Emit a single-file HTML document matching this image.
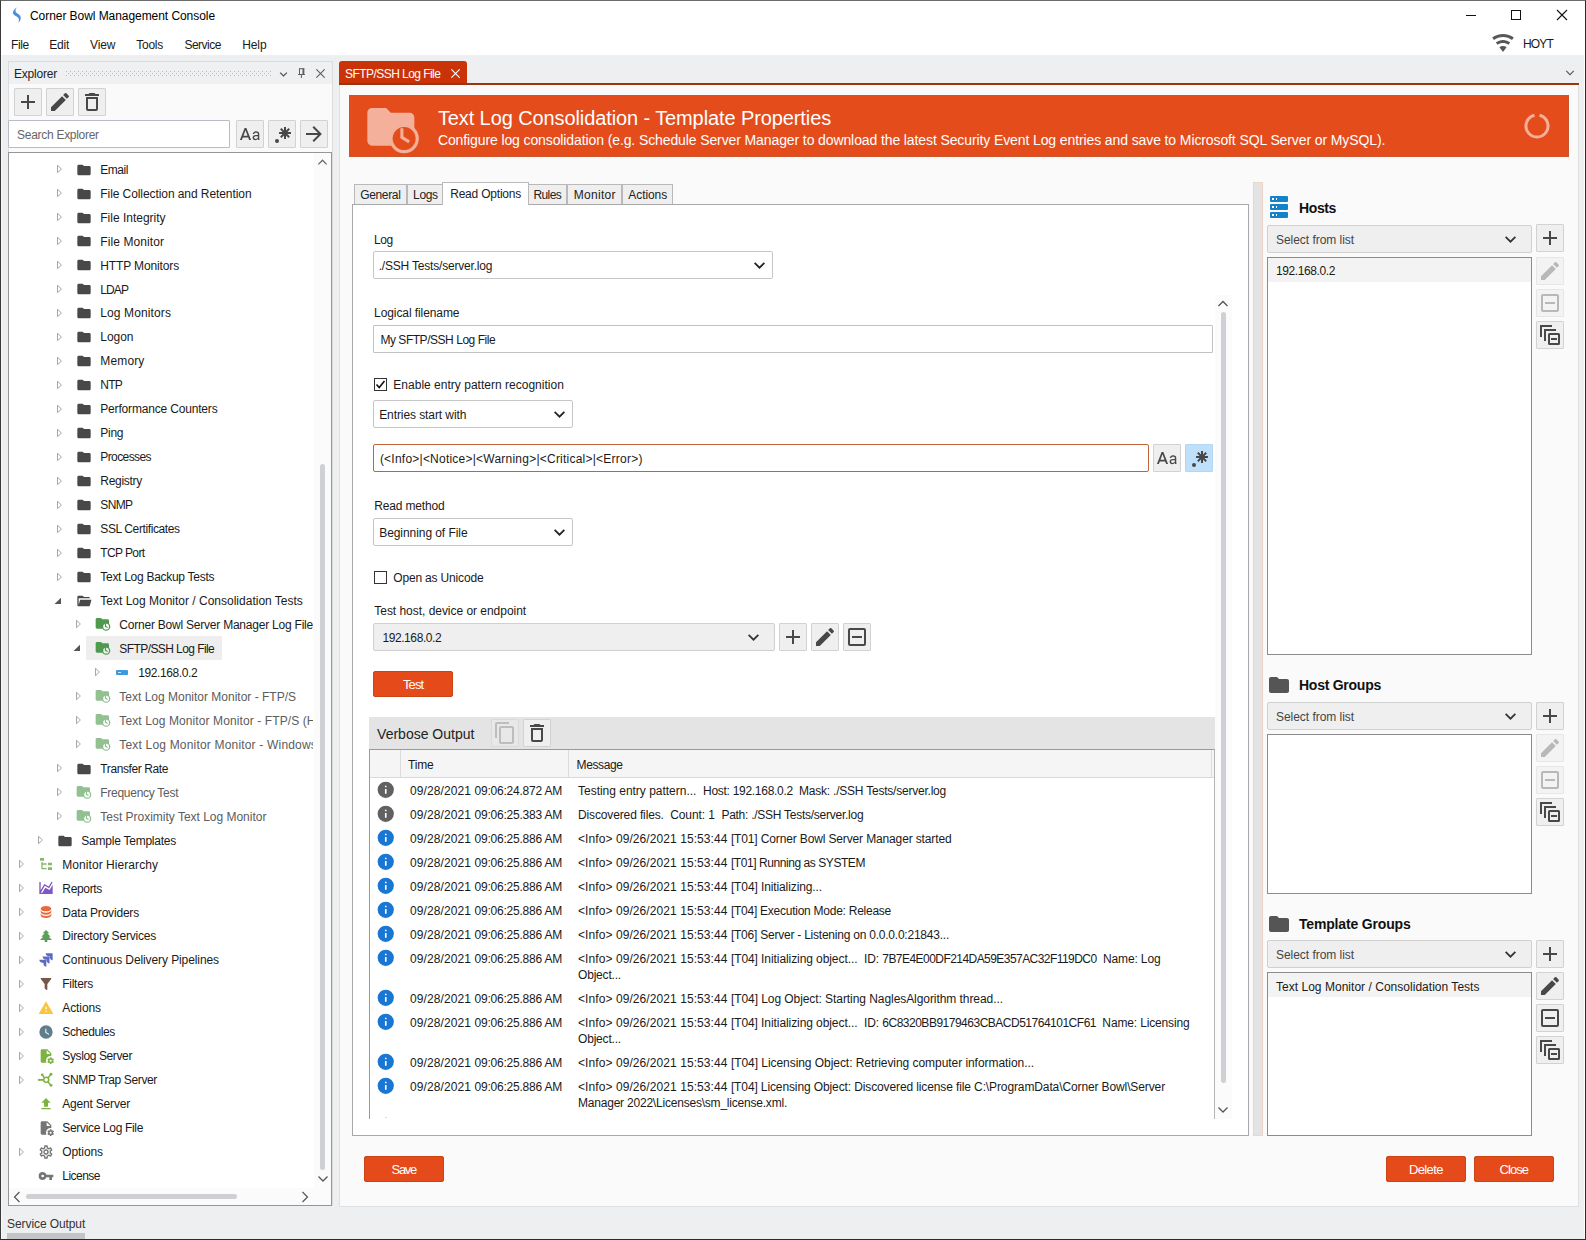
<!DOCTYPE html>
<html><head><meta charset="utf-8"><title>Corner Bowl Management Console</title>
<style>
*{box-sizing:border-box;margin:0;padding:0}
html,body{width:1586px;height:1240px;overflow:hidden;background:#eeeff1}
body{font-family:"Liberation Sans",sans-serif;font-size:12px;color:#1a1a1a;position:relative}
.abs{position:absolute}
.t{position:absolute;white-space:pre;line-height:16px;font-size:12px;margin-top:1px}
.btn{position:absolute;border:1px solid #d2d2d2;background:#efefef;border-radius:1px}
.combo{position:absolute;border:1px solid #c6c6c6;border-radius:2px;background:#fff}
.inp{position:absolute;border:1px solid #c2c2c2;background:#fff;border-radius:1px}
.rbtn{position:absolute;background:#e54b1a;border:1px solid #cb4413;border-radius:2px}
.tab{position:absolute;top:184px;height:20px;border:1px solid #b9b9b9;border-bottom:none;background:#efefef}
#tree{position:absolute;left:9px;top:153px;width:304px;height:1035px;overflow:hidden;background:#fff}
</style></head><body>
<!-- window frame -->
<div class="abs" style="left:0;top:0;width:1586px;height:1240px;border:1px solid #2b2b2b;border-top-color:#6a6a6a;border-left-color:#3a3a3a"></div>
<div class="abs" style="left:1px;top:1px;width:1584px;height:1238px;border-left:1px solid #f8f8f8;border-right:1px solid #fdfdfd"></div>
<!-- title + menu bar -->
<div class="abs" style="left:1px;top:1px;width:1584px;height:54px;background:#fff"></div>
<svg class="abs" style="left:11px;top:6px" width="12" height="18" viewBox="0 0 12 18"><path d="M5.9,1.2C3.5,3 1.6,5 2,7.2C2.5,9.4 6,9.8 7.4,12C8.3,13.5 8,15 7.3,16.7C9.2,15 10.1,13 9.6,10.9C9,8.4 5.6,7.6 4.7,5.8C4.1,4.5 4.8,2.8 5.9,1.2Z" fill="#4a8fd8"/></svg>
<div class="t" style="left:30.0px;top:7.0px;color:#000;letter-spacing:-0.059px">Corner Bowl Management Console</div>
<!-- window controls -->
<div class="abs" style="left:1466px;top:15px;width:10px;height:1px;background:#111"></div>
<div class="abs" style="left:1511px;top:10px;width:10px;height:10px;border:1px solid #111"></div>
<svg class="abs" style="left:1556px;top:9px" width="12" height="12" viewBox="0 0 12 12"><path d="M1,1L11,11M11,1L1,11" stroke="#111" stroke-width="1.1"/></svg>
<!-- menu -->
<div class="t" style="left:11.1px;top:36.0px;letter-spacing:-0.386px">File</div>
<div class="t" style="left:49.3px;top:36.0px;letter-spacing:-0.247px">Edit</div>
<div class="t" style="left:90.0px;top:36.0px;letter-spacing:-0.124px">View</div>
<div class="t" style="left:136.3px;top:36.0px;letter-spacing:-0.283px">Tools</div>
<div class="t" style="left:184.4px;top:36.0px;letter-spacing:-0.517px">Service</div>
<div class="t" style="left:242.2px;top:36.0px;letter-spacing:-0.097px">Help</div>
<svg style="position:absolute;left:1490.8px;top:30.9px" width="24.0" height="24.0" viewBox="0 0 24 24"><path fill="#585858" fill-rule="evenodd" d="M12,21L15.6,16.2C14.6,15.45 13.35,15 12,15C10.65,15 9.4,15.45 8.4,16.2L12,21M12,3C7.95,3 4.21,4.34 1.2,6.6L3,9C5.5,7.12 8.62,6 12,6C15.38,6 18.5,7.12 21,9L22.8,6.6C19.79,4.34 16.05,3 12,3M12,9C9.3,9 6.81,9.89 4.8,11.4L6.6,13.8C8.1,12.67 9.97,12 12,12C14.03,12 15.9,12.67 17.4,13.8L19.2,11.4C17.19,9.89 14.7,9 12,9Z"/></svg>
<div class="t" style="left:1523.0px;top:35.0px;letter-spacing:-0.836px">HOYT</div>

<!-- explorer panel -->
<div class="abs" style="left:8px;top:61px;width:325px;height:1145px;background:#fafafa;border:1px solid #dcdcdc"></div>
<div class="abs" style="left:9px;top:62px;width:323px;height:22px;background:#eff0f2"></div>
<div class="t" style="left:14.0px;top:65.0px;color:#222;letter-spacing:-0.211px">Explorer</div>
<svg class="abs" style="left:66px;top:71px" width="206" height="5"><defs><pattern id="dp" width="4" height="4" patternUnits="userSpaceOnUse"><rect x="0" y="0" width="1" height="1" fill="#b9bbc0"/><rect x="2" y="2" width="1" height="1" fill="#b9bbc0"/></pattern></defs><rect width="206" height="5" fill="url(#dp)"/></svg>
<svg style="position:absolute;left:279.0px;top:69.5px" width="9.0" height="9.0" viewBox="0 0 12 12"><path d="M1.5,3.5L6,8L10.5,3.5" fill="none" stroke="#4e4e4e" stroke-width="1.6"/></svg>
<svg class="abs" style="left:297px;top:67px" width="10" height="12" viewBox="0 0 10 12"><path d="M2,1.7H7.4M2.5,1.7V7.5M1.2,7.5H7.9M4.4,7.5V11" stroke="#5e5e5e" stroke-width="1" fill="none"/><path d="M6.4,1.7V7.5" stroke="#5e5e5e" stroke-width="1.9" fill="none"/></svg>
<svg class="abs" style="left:316px;top:69px" width="9" height="9" viewBox="0 0 9 9"><path d="M0.3,0.3L8.7,8.7M8.7,0.3L0.3,8.7" stroke="#5e5e5e" stroke-width="1.1"/></svg>
<div class="btn" style="left:14.0px;top:88.0px;width:28px;height:28px;background:#efefef;border-color:#d2d2d2"><svg style="position:absolute;left:1.0px;top:1.0px" width="24" height="24" viewBox="0 0 24 24"><path fill="#484848" fill-rule="evenodd" d="M19,13H13V19H11V13H5V11H11V5H13V11H19V13Z"/></svg></div>
<div class="btn" style="left:46.0px;top:88.0px;width:28px;height:28px;background:#efefef;border-color:#d2d2d2"><svg style="position:absolute;left:1.0px;top:1.0px" width="24" height="24" viewBox="0 0 24 24"><path fill="#484848" fill-rule="evenodd" d="M20.71,7.04C21.1,6.65 21.1,6 20.71,5.63L18.37,3.29C18,2.9 17.35,2.9 16.96,3.29L15.12,5.12L18.87,8.87M3,17.25V21H6.75L17.81,9.93L14.06,6.18L3,17.25Z"/></svg></div>
<div class="btn" style="left:78.0px;top:88.0px;width:28px;height:28px;background:#efefef;border-color:#d2d2d2"><svg style="position:absolute;left:1.0px;top:1.0px" width="24" height="24" viewBox="0 0 24 24"><path fill="#484848" fill-rule="evenodd" d="M6,19A2,2 0 0,0 8,21H16A2,2 0 0,0 18,19V7H6V19M8,9H16V19H8V9M15.5,4L14.5,3H9.5L8.5,4H5V6H19V4H15.5Z"/></svg></div>
<div class="inp" style="left:8px;top:120px;width:222px;height:28px;border-color:#b9bcc4"></div>
<div class="t" style="left:17.1px;top:125.5px;color:#666;letter-spacing:-0.290px">Search Explorer</div>
<div class="btn" style="left:236.0px;top:120.0px;width:28px;height:28px;background:#efefef;border-color:#d2d2d2"><svg style="position:absolute;left:1.0px;top:1.0px" width="24" height="24" viewBox="0 0 24 24"><path fill="#484848" fill-rule="evenodd" d="M20.06,18C20,17.83 19.91,17.54 19.86,17.11C19.19,17.81 18.38,18.16 17.45,18.16C16.62,18.16 15.93,17.92 15.4,17.45C14.87,17 14.6,16.39 14.6,15.66C14.6,14.78 14.93,14.1 15.6,13.61C16.27,13.12 17.21,12.88 18.43,12.88H19.83V12.24C19.83,11.75 19.68,11.36 19.38,11.07C19.08,10.78 18.63,10.64 18.05,10.64C17.53,10.64 17.1,10.76 16.75,11C16.4,11.25 16.23,11.54 16.23,11.89H14.77C14.77,11.46 14.92,11.05 15.22,10.65C15.5,10.25 15.93,9.94 16.44,9.71C16.95,9.5 17.5,9.36 18.13,9.36C19.11,9.36 19.87,9.6 20.42,10.09C20.97,10.58 21.26,11.25 21.28,12.11V16C21.28,16.8 21.38,17.42 21.58,17.88V18H20.06M17.66,16.88C18.11,16.88 18.54,16.77 18.95,16.56C19.35,16.35 19.65,16.07 19.83,15.73V14.16H18.7C16.93,14.16 16.04,14.63 16.04,15.57C16.04,16 16.19,16.3 16.5,16.53C16.8,16.76 17.18,16.88 17.66,16.88M5.46,13.71H9.53L7.5,8.29L5.46,13.71M6.64,6H8.36L13.07,18H11.14L10.17,15.43H4.82L3.86,18H1.93L6.64,6Z"/></svg></div>
<div class="btn" style="left:268.0px;top:120.0px;width:28px;height:28px;background:#efefef;border-color:#d2d2d2"><svg style="position:absolute;left:1.0px;top:1.0px" width="24" height="24" viewBox="0 0 24 24"><path fill="#484848" fill-rule="evenodd" d="M16,16.92C15.67,16.97 15.34,17 15,17C14.66,17 14.33,16.97 14,16.92V13.41L11.5,15.89C11,15.5 10.5,15 10.11,14.5L12.59,12H9.08C9.03,11.67 9,11.34 9,11C9,10.66 9.03,10.33 9.08,10H12.59L10.11,7.5C10.3,7.25 10.5,7 10.76,6.76V6.76C11,6.5 11.25,6.3 11.5,6.11L14,8.59V5.08C14.33,5.03 14.66,5 15,5C15.34,5 15.67,5.03 16,5.08V8.59L18.5,6.11C19,6.5 19.5,7 19.89,7.5L17.41,10H20.92C20.97,10.33 21,10.66 21,11C21,11.34 20.97,11.67 20.92,12H17.41L19.89,14.5C19.7,14.75 19.5,15 19.24,15.24V15.24C19,15.5 18.75,15.7 18.5,15.89L16,13.41V16.92M5,19A2,2 0 0,1 7,17A2,2 0 0,1 9,19A2,2 0 0,1 7,21A2,2 0 0,1 5,19H5Z"/></svg></div>
<div class="btn" style="left:300.0px;top:120.0px;width:28px;height:28px;background:#efefef;border-color:#d2d2d2"><svg style="position:absolute;left:1.0px;top:1.0px" width="24" height="24" viewBox="0 0 24 24"><path fill="#484848" fill-rule="evenodd" d="M4,11V13H16L10.5,18.5L11.92,19.92L19.84,12L11.92,4.08L10.5,5.5L16,11H4Z"/></svg></div>
<!-- tree box -->
<div class="abs" style="left:8px;top:152px;width:324px;height:1054px;background:#fff;border:1px solid #969696"></div>
<div id="tree">
<svg style="position:absolute;left:46.5px;top:10.20px" width="8" height="12" viewBox="0 0 8 12"><path d="M1.5,2.3L5.4,6L1.5,9.7Z" fill="#fff" stroke="#a6a6a6" stroke-width="1"/></svg>
<svg style="position:absolute;left:67.3px;top:8.6px" width="16" height="16" viewBox="0 0 24 24"><path fill="#484848" fill-rule="evenodd" d="M10,4H4C2.89,4 2,4.89 2,6V18A2,2 0 0,0 4,20H20A2,2 0 0,0 22,18V8C22,6.89 21.1,6 20,6H12L10,4Z"/></svg>
<div class="t" style="left:91.3px;top:7.7px;color:#1a1a1a;letter-spacing:-0.463px">Email</div>
<svg style="position:absolute;left:46.5px;top:34.16px" width="8" height="12" viewBox="0 0 8 12"><path d="M1.5,2.3L5.4,6L1.5,9.7Z" fill="#fff" stroke="#a6a6a6" stroke-width="1"/></svg>
<svg style="position:absolute;left:67.3px;top:32.559999999999995px" width="16" height="16" viewBox="0 0 24 24"><path fill="#484848" fill-rule="evenodd" d="M10,4H4C2.89,4 2,4.89 2,6V18A2,2 0 0,0 4,20H20A2,2 0 0,0 22,18V8C22,6.89 21.1,6 20,6H12L10,4Z"/></svg>
<div class="t" style="left:91.3px;top:31.66px;color:#1a1a1a;letter-spacing:-0.077px">File Collection and Retention</div>
<svg style="position:absolute;left:46.5px;top:58.12px" width="8" height="12" viewBox="0 0 8 12"><path d="M1.5,2.3L5.4,6L1.5,9.7Z" fill="#fff" stroke="#a6a6a6" stroke-width="1"/></svg>
<svg style="position:absolute;left:67.3px;top:56.519999999999996px" width="16" height="16" viewBox="0 0 24 24"><path fill="#484848" fill-rule="evenodd" d="M10,4H4C2.89,4 2,4.89 2,6V18A2,2 0 0,0 4,20H20A2,2 0 0,0 22,18V8C22,6.89 21.1,6 20,6H12L10,4Z"/></svg>
<div class="t" style="left:91.3px;top:55.62px;color:#1a1a1a;letter-spacing:-0.011px">File Integrity</div>
<svg style="position:absolute;left:46.5px;top:82.09px" width="8" height="12" viewBox="0 0 8 12"><path d="M1.5,2.3L5.4,6L1.5,9.7Z" fill="#fff" stroke="#a6a6a6" stroke-width="1"/></svg>
<svg style="position:absolute;left:67.3px;top:80.49000000000001px" width="16" height="16" viewBox="0 0 24 24"><path fill="#484848" fill-rule="evenodd" d="M10,4H4C2.89,4 2,4.89 2,6V18A2,2 0 0,0 4,20H20A2,2 0 0,0 22,18V8C22,6.89 21.1,6 20,6H12L10,4Z"/></svg>
<div class="t" style="left:91.3px;top:79.59px;color:#1a1a1a;letter-spacing:0.084px">File Monitor</div>
<svg style="position:absolute;left:46.5px;top:106.05px" width="8" height="12" viewBox="0 0 8 12"><path d="M1.5,2.3L5.4,6L1.5,9.7Z" fill="#fff" stroke="#a6a6a6" stroke-width="1"/></svg>
<svg style="position:absolute;left:67.3px;top:104.45px" width="16" height="16" viewBox="0 0 24 24"><path fill="#484848" fill-rule="evenodd" d="M10,4H4C2.89,4 2,4.89 2,6V18A2,2 0 0,0 4,20H20A2,2 0 0,0 22,18V8C22,6.89 21.1,6 20,6H12L10,4Z"/></svg>
<div class="t" style="left:91.3px;top:103.55px;color:#1a1a1a;letter-spacing:-0.136px">HTTP Monitors</div>
<svg style="position:absolute;left:46.5px;top:130.01px" width="8" height="12" viewBox="0 0 8 12"><path d="M1.5,2.3L5.4,6L1.5,9.7Z" fill="#fff" stroke="#a6a6a6" stroke-width="1"/></svg>
<svg style="position:absolute;left:67.3px;top:128.41px" width="16" height="16" viewBox="0 0 24 24"><path fill="#484848" fill-rule="evenodd" d="M10,4H4C2.89,4 2,4.89 2,6V18A2,2 0 0,0 4,20H20A2,2 0 0,0 22,18V8C22,6.89 21.1,6 20,6H12L10,4Z"/></svg>
<div class="t" style="left:91.3px;top:127.51px;color:#1a1a1a;letter-spacing:-0.915px">LDAP</div>
<svg style="position:absolute;left:46.5px;top:153.97px" width="8" height="12" viewBox="0 0 8 12"><path d="M1.5,2.3L5.4,6L1.5,9.7Z" fill="#fff" stroke="#a6a6a6" stroke-width="1"/></svg>
<svg style="position:absolute;left:67.3px;top:152.37px" width="16" height="16" viewBox="0 0 24 24"><path fill="#484848" fill-rule="evenodd" d="M10,4H4C2.89,4 2,4.89 2,6V18A2,2 0 0,0 4,20H20A2,2 0 0,0 22,18V8C22,6.89 21.1,6 20,6H12L10,4Z"/></svg>
<div class="t" style="left:91.3px;top:151.47px;color:#1a1a1a;letter-spacing:0.110px">Log Monitors</div>
<svg style="position:absolute;left:46.5px;top:177.93px" width="8" height="12" viewBox="0 0 8 12"><path d="M1.5,2.3L5.4,6L1.5,9.7Z" fill="#fff" stroke="#a6a6a6" stroke-width="1"/></svg>
<svg style="position:absolute;left:67.3px;top:176.33px" width="16" height="16" viewBox="0 0 24 24"><path fill="#484848" fill-rule="evenodd" d="M10,4H4C2.89,4 2,4.89 2,6V18A2,2 0 0,0 4,20H20A2,2 0 0,0 22,18V8C22,6.89 21.1,6 20,6H12L10,4Z"/></svg>
<div class="t" style="left:91.3px;top:175.43px;color:#1a1a1a;letter-spacing:-0.035px">Logon</div>
<svg style="position:absolute;left:46.5px;top:201.90px" width="8" height="12" viewBox="0 0 8 12"><path d="M1.5,2.3L5.4,6L1.5,9.7Z" fill="#fff" stroke="#a6a6a6" stroke-width="1"/></svg>
<svg style="position:absolute;left:67.3px;top:200.3px" width="16" height="16" viewBox="0 0 24 24"><path fill="#484848" fill-rule="evenodd" d="M10,4H4C2.89,4 2,4.89 2,6V18A2,2 0 0,0 4,20H20A2,2 0 0,0 22,18V8C22,6.89 21.1,6 20,6H12L10,4Z"/></svg>
<div class="t" style="left:91.3px;top:199.4px;color:#1a1a1a;letter-spacing:0.143px">Memory</div>
<svg style="position:absolute;left:46.5px;top:225.86px" width="8" height="12" viewBox="0 0 8 12"><path d="M1.5,2.3L5.4,6L1.5,9.7Z" fill="#fff" stroke="#a6a6a6" stroke-width="1"/></svg>
<svg style="position:absolute;left:67.3px;top:224.26000000000002px" width="16" height="16" viewBox="0 0 24 24"><path fill="#484848" fill-rule="evenodd" d="M10,4H4C2.89,4 2,4.89 2,6V18A2,2 0 0,0 4,20H20A2,2 0 0,0 22,18V8C22,6.89 21.1,6 20,6H12L10,4Z"/></svg>
<div class="t" style="left:91.3px;top:223.36px;color:#1a1a1a;letter-spacing:-0.767px">NTP</div>
<svg style="position:absolute;left:46.5px;top:249.82px" width="8" height="12" viewBox="0 0 8 12"><path d="M1.5,2.3L5.4,6L1.5,9.7Z" fill="#fff" stroke="#a6a6a6" stroke-width="1"/></svg>
<svg style="position:absolute;left:67.3px;top:248.22px" width="16" height="16" viewBox="0 0 24 24"><path fill="#484848" fill-rule="evenodd" d="M10,4H4C2.89,4 2,4.89 2,6V18A2,2 0 0,0 4,20H20A2,2 0 0,0 22,18V8C22,6.89 21.1,6 20,6H12L10,4Z"/></svg>
<div class="t" style="left:91.3px;top:247.32px;color:#1a1a1a;letter-spacing:-0.177px">Performance Counters</div>
<svg style="position:absolute;left:46.5px;top:273.78px" width="8" height="12" viewBox="0 0 8 12"><path d="M1.5,2.3L5.4,6L1.5,9.7Z" fill="#fff" stroke="#a6a6a6" stroke-width="1"/></svg>
<svg style="position:absolute;left:67.3px;top:272.17999999999995px" width="16" height="16" viewBox="0 0 24 24"><path fill="#484848" fill-rule="evenodd" d="M10,4H4C2.89,4 2,4.89 2,6V18A2,2 0 0,0 4,20H20A2,2 0 0,0 22,18V8C22,6.89 21.1,6 20,6H12L10,4Z"/></svg>
<div class="t" style="left:91.3px;top:271.28px;color:#1a1a1a;letter-spacing:-0.283px">Ping</div>
<svg style="position:absolute;left:46.5px;top:297.74px" width="8" height="12" viewBox="0 0 8 12"><path d="M1.5,2.3L5.4,6L1.5,9.7Z" fill="#fff" stroke="#a6a6a6" stroke-width="1"/></svg>
<svg style="position:absolute;left:67.3px;top:296.14px" width="16" height="16" viewBox="0 0 24 24"><path fill="#484848" fill-rule="evenodd" d="M10,4H4C2.89,4 2,4.89 2,6V18A2,2 0 0,0 4,20H20A2,2 0 0,0 22,18V8C22,6.89 21.1,6 20,6H12L10,4Z"/></svg>
<div class="t" style="left:91.3px;top:295.24px;color:#1a1a1a;letter-spacing:-0.592px">Processes</div>
<svg style="position:absolute;left:46.5px;top:321.71px" width="8" height="12" viewBox="0 0 8 12"><path d="M1.5,2.3L5.4,6L1.5,9.7Z" fill="#fff" stroke="#a6a6a6" stroke-width="1"/></svg>
<svg style="position:absolute;left:67.3px;top:320.10999999999996px" width="16" height="16" viewBox="0 0 24 24"><path fill="#484848" fill-rule="evenodd" d="M10,4H4C2.89,4 2,4.89 2,6V18A2,2 0 0,0 4,20H20A2,2 0 0,0 22,18V8C22,6.89 21.1,6 20,6H12L10,4Z"/></svg>
<div class="t" style="left:91.3px;top:319.21px;color:#1a1a1a;letter-spacing:-0.289px">Registry</div>
<svg style="position:absolute;left:46.5px;top:345.67px" width="8" height="12" viewBox="0 0 8 12"><path d="M1.5,2.3L5.4,6L1.5,9.7Z" fill="#fff" stroke="#a6a6a6" stroke-width="1"/></svg>
<svg style="position:absolute;left:67.3px;top:344.07px" width="16" height="16" viewBox="0 0 24 24"><path fill="#484848" fill-rule="evenodd" d="M10,4H4C2.89,4 2,4.89 2,6V18A2,2 0 0,0 4,20H20A2,2 0 0,0 22,18V8C22,6.89 21.1,6 20,6H12L10,4Z"/></svg>
<div class="t" style="left:91.3px;top:343.17px;color:#1a1a1a;letter-spacing:-0.618px">SNMP</div>
<svg style="position:absolute;left:46.5px;top:369.63px" width="8" height="12" viewBox="0 0 8 12"><path d="M1.5,2.3L5.4,6L1.5,9.7Z" fill="#fff" stroke="#a6a6a6" stroke-width="1"/></svg>
<svg style="position:absolute;left:67.3px;top:368.03px" width="16" height="16" viewBox="0 0 24 24"><path fill="#484848" fill-rule="evenodd" d="M10,4H4C2.89,4 2,4.89 2,6V18A2,2 0 0,0 4,20H20A2,2 0 0,0 22,18V8C22,6.89 21.1,6 20,6H12L10,4Z"/></svg>
<div class="t" style="left:91.3px;top:367.13px;color:#1a1a1a;letter-spacing:-0.387px">SSL Certificates</div>
<svg style="position:absolute;left:46.5px;top:393.59px" width="8" height="12" viewBox="0 0 8 12"><path d="M1.5,2.3L5.4,6L1.5,9.7Z" fill="#fff" stroke="#a6a6a6" stroke-width="1"/></svg>
<svg style="position:absolute;left:67.3px;top:391.98999999999995px" width="16" height="16" viewBox="0 0 24 24"><path fill="#484848" fill-rule="evenodd" d="M10,4H4C2.89,4 2,4.89 2,6V18A2,2 0 0,0 4,20H20A2,2 0 0,0 22,18V8C22,6.89 21.1,6 20,6H12L10,4Z"/></svg>
<div class="t" style="left:91.3px;top:391.09px;color:#1a1a1a;letter-spacing:-0.616px">TCP Port</div>
<svg style="position:absolute;left:46.5px;top:417.55px" width="8" height="12" viewBox="0 0 8 12"><path d="M1.5,2.3L5.4,6L1.5,9.7Z" fill="#fff" stroke="#a6a6a6" stroke-width="1"/></svg>
<svg style="position:absolute;left:67.3px;top:415.95px" width="16" height="16" viewBox="0 0 24 24"><path fill="#484848" fill-rule="evenodd" d="M10,4H4C2.89,4 2,4.89 2,6V18A2,2 0 0,0 4,20H20A2,2 0 0,0 22,18V8C22,6.89 21.1,6 20,6H12L10,4Z"/></svg>
<div class="t" style="left:91.3px;top:415.05px;color:#1a1a1a;letter-spacing:-0.284px">Text Log Backup Tests</div>
<svg style="position:absolute;left:44px;top:442.52px" width="10" height="10" viewBox="0 0 10 10"><path d="M8,1.7V8H1.5Z" fill="#555"/></svg>
<svg style="position:absolute;left:67.3px;top:439.91999999999996px" width="16" height="16" viewBox="0 0 24 24"><path fill="#484848" fill-rule="evenodd" d="M19,20H4C2.89,20 2,19.1 2,18V6C2,4.89 2.89,4 4,4H10L12,6H19A2,2 0 0,1 21,8H21L4,8V18L6.14,10H23.21L20.93,18.5C20.7,19.37 19.92,20 19,20Z"/></svg>
<div class="t" style="left:91.3px;top:439.02px;color:#1a1a1a">Text Log Monitor / Consolidation Tests</div>
<svg style="position:absolute;left:65.5px;top:465.48px" width="8" height="12" viewBox="0 0 8 12"><path d="M1.5,2.3L5.4,6L1.5,9.7Z" fill="#fff" stroke="#a6a6a6" stroke-width="1"/></svg>
<svg style="position:absolute;left:86px;top:463.48px;opacity:1.0" width="16" height="16" viewBox="0 0 24 24"><path fill="#4f9a4f" d="M9,3H3C1.9,3 1,3.9 1,5V17A2,2 0 0,0 3,19H19A2,2 0 0,0 21,17V7C21,5.9 20.1,5 19,5H11L9,3Z"/><circle cx="16.66" cy="16" r="6.26" fill="#4f9a4f"/><circle cx="16.66" cy="16" r="4.3" fill="#fff"/><path d="M15.7,11.6V15.5L18.8,17.4" stroke="#4f9a4f" stroke-width="1.7" fill="none"/></svg>
<div class="t" style="left:110.3px;top:462.98px;color:#1a1a1a;letter-spacing:-0.221px">Corner Bowl Server Manager Log File</div>
<div style="position:absolute;left:77px;top:483.44px;width:136px;height:24px;background:#eeeeee"></div>
<svg style="position:absolute;left:63px;top:490.44px" width="10" height="10" viewBox="0 0 10 10"><path d="M8,1.7V8H1.5Z" fill="#555"/></svg>
<svg style="position:absolute;left:86px;top:487.44px;opacity:1.0" width="16" height="16" viewBox="0 0 24 24"><path fill="#4f9a4f" d="M9,3H3C1.9,3 1,3.9 1,5V17A2,2 0 0,0 3,19H19A2,2 0 0,0 21,17V7C21,5.9 20.1,5 19,5H11L9,3Z"/><circle cx="16.66" cy="16" r="6.26" fill="#4f9a4f"/><circle cx="16.66" cy="16" r="4.3" fill="#eeeeee"/><path d="M15.7,11.6V15.5L18.8,17.4" stroke="#4f9a4f" stroke-width="1.7" fill="none"/></svg>
<div class="t" style="left:110.3px;top:486.94px;color:#1a1a1a;letter-spacing:-0.577px">SFTP/SSH Log File</div>
<svg style="position:absolute;left:84.5px;top:513.40px" width="8" height="12" viewBox="0 0 8 12"><path d="M1.5,2.3L5.4,6L1.5,9.7Z" fill="#fff" stroke="#a6a6a6" stroke-width="1"/></svg>
<div style="position:absolute;left:107px;top:517.20px;width:12px;height:4.6px;background:#3d9ae0;border-radius:1px"></div><div style="position:absolute;left:108.5px;top:519.00px;width:3px;height:1px;background:#cfe6fa"></div>
<div class="t" style="left:129.3px;top:510.9px;color:#1a1a1a;letter-spacing:-0.410px">192.168.0.2</div>
<svg style="position:absolute;left:65.5px;top:537.36px" width="8" height="12" viewBox="0 0 8 12"><path d="M1.5,2.3L5.4,6L1.5,9.7Z" fill="#fff" stroke="#a6a6a6" stroke-width="1"/></svg>
<svg style="position:absolute;left:86px;top:535.36px;opacity:0.62" width="16" height="16" viewBox="0 0 24 24"><path fill="#4f9a4f" d="M9,3H3C1.9,3 1,3.9 1,5V17A2,2 0 0,0 3,19H19A2,2 0 0,0 21,17V7C21,5.9 20.1,5 19,5H11L9,3Z"/><circle cx="16.66" cy="16" r="6.26" fill="#4f9a4f"/><circle cx="16.66" cy="16" r="4.3" fill="#fff"/><path d="M15.7,11.6V15.5L18.8,17.4" stroke="#4f9a4f" stroke-width="1.7" fill="none"/></svg>
<div class="t" style="left:110.3px;top:534.86px;color:#5c5c5c">Text Log Monitor Monitor - FTP/S</div>
<svg style="position:absolute;left:65.5px;top:561.33px" width="8" height="12" viewBox="0 0 8 12"><path d="M1.5,2.3L5.4,6L1.5,9.7Z" fill="#fff" stroke="#a6a6a6" stroke-width="1"/></svg>
<svg style="position:absolute;left:86px;top:559.33px;opacity:0.62" width="16" height="16" viewBox="0 0 24 24"><path fill="#4f9a4f" d="M9,3H3C1.9,3 1,3.9 1,5V17A2,2 0 0,0 3,19H19A2,2 0 0,0 21,17V7C21,5.9 20.1,5 19,5H11L9,3Z"/><circle cx="16.66" cy="16" r="6.26" fill="#4f9a4f"/><circle cx="16.66" cy="16" r="4.3" fill="#fff"/><path d="M15.7,11.6V15.5L18.8,17.4" stroke="#4f9a4f" stroke-width="1.7" fill="none"/></svg>
<div class="t" style="left:110.3px;top:558.83px;color:#5c5c5c;letter-spacing:0.102px">Text Log Monitor Monitor - FTP/S (Host)</div>
<svg style="position:absolute;left:65.5px;top:585.29px" width="8" height="12" viewBox="0 0 8 12"><path d="M1.5,2.3L5.4,6L1.5,9.7Z" fill="#fff" stroke="#a6a6a6" stroke-width="1"/></svg>
<svg style="position:absolute;left:86px;top:583.29px;opacity:0.62" width="16" height="16" viewBox="0 0 24 24"><path fill="#4f9a4f" d="M9,3H3C1.9,3 1,3.9 1,5V17A2,2 0 0,0 3,19H19A2,2 0 0,0 21,17V7C21,5.9 20.1,5 19,5H11L9,3Z"/><circle cx="16.66" cy="16" r="6.26" fill="#4f9a4f"/><circle cx="16.66" cy="16" r="4.3" fill="#fff"/><path d="M15.7,11.6V15.5L18.8,17.4" stroke="#4f9a4f" stroke-width="1.7" fill="none"/></svg>
<div class="t" style="left:110.3px;top:582.79px;color:#5c5c5c;letter-spacing:0.185px">Text Log Monitor Monitor - Windows</div>
<svg style="position:absolute;left:46.5px;top:609.25px" width="8" height="12" viewBox="0 0 8 12"><path d="M1.5,2.3L5.4,6L1.5,9.7Z" fill="#fff" stroke="#a6a6a6" stroke-width="1"/></svg>
<svg style="position:absolute;left:67.3px;top:607.65px" width="16" height="16" viewBox="0 0 24 24"><path fill="#484848" fill-rule="evenodd" d="M10,4H4C2.89,4 2,4.89 2,6V18A2,2 0 0,0 4,20H20A2,2 0 0,0 22,18V8C22,6.89 21.1,6 20,6H12L10,4Z"/></svg>
<div class="t" style="left:91.3px;top:606.75px;color:#1a1a1a;letter-spacing:-0.394px">Transfer Rate</div>
<svg style="position:absolute;left:46.5px;top:633.21px" width="8" height="12" viewBox="0 0 8 12"><path d="M1.5,2.3L5.4,6L1.5,9.7Z" fill="#fff" stroke="#a6a6a6" stroke-width="1"/></svg>
<svg style="position:absolute;left:67px;top:631.21px;opacity:0.62" width="16" height="16" viewBox="0 0 24 24"><path fill="#4f9a4f" d="M9,3H3C1.9,3 1,3.9 1,5V17A2,2 0 0,0 3,19H19A2,2 0 0,0 21,17V7C21,5.9 20.1,5 19,5H11L9,3Z"/><circle cx="16.66" cy="16" r="6.26" fill="#4f9a4f"/><circle cx="16.66" cy="16" r="4.3" fill="#fff"/><path d="M15.7,11.6V15.5L18.8,17.4" stroke="#4f9a4f" stroke-width="1.7" fill="none"/></svg>
<div class="t" style="left:91.3px;top:630.71px;color:#5c5c5c;letter-spacing:-0.281px">Frequency Test</div>
<svg style="position:absolute;left:46.5px;top:657.17px" width="8" height="12" viewBox="0 0 8 12"><path d="M1.5,2.3L5.4,6L1.5,9.7Z" fill="#fff" stroke="#a6a6a6" stroke-width="1"/></svg>
<svg style="position:absolute;left:67px;top:655.17px;opacity:0.62" width="16" height="16" viewBox="0 0 24 24"><path fill="#4f9a4f" d="M9,3H3C1.9,3 1,3.9 1,5V17A2,2 0 0,0 3,19H19A2,2 0 0,0 21,17V7C21,5.9 20.1,5 19,5H11L9,3Z"/><circle cx="16.66" cy="16" r="6.26" fill="#4f9a4f"/><circle cx="16.66" cy="16" r="4.3" fill="#fff"/><path d="M15.7,11.6V15.5L18.8,17.4" stroke="#4f9a4f" stroke-width="1.7" fill="none"/></svg>
<div class="t" style="left:91.3px;top:654.67px;color:#5c5c5c;letter-spacing:-0.013px">Test Proximity Text Log Monitor</div>
<svg style="position:absolute;left:27.5px;top:681.14px" width="8" height="12" viewBox="0 0 8 12"><path d="M1.5,2.3L5.4,6L1.5,9.7Z" fill="#fff" stroke="#a6a6a6" stroke-width="1"/></svg>
<svg style="position:absolute;left:48.3px;top:679.54px" width="16" height="16" viewBox="0 0 24 24"><path fill="#484848" fill-rule="evenodd" d="M10,4H4C2.89,4 2,4.89 2,6V18A2,2 0 0,0 4,20H20A2,2 0 0,0 22,18V8C22,6.89 21.1,6 20,6H12L10,4Z"/></svg>
<div class="t" style="left:72.3px;top:678.64px;color:#1a1a1a;letter-spacing:-0.237px">Sample Templates</div>
<svg style="position:absolute;left:8.5px;top:705.10px" width="8" height="12" viewBox="0 0 8 12"><path d="M1.5,2.3L5.4,6L1.5,9.7Z" fill="#fff" stroke="#a6a6a6" stroke-width="1"/></svg>
<svg style="position:absolute;left:29px;top:703.1px" width="16" height="16" viewBox="0 0 24 24"><path fill="#8bb868" fill-rule="evenodd" d="M3,3H9V7H3V3M15,10H21V14H15V10M15,17H21V21H15V17M13,13H7V18H13V20H7L5,20V9H7V11H13V13Z"/></svg>
<div class="t" style="left:53.3px;top:702.6px;color:#1a1a1a;letter-spacing:0.059px">Monitor Hierarchy</div>
<svg style="position:absolute;left:8.5px;top:729.06px" width="8" height="12" viewBox="0 0 8 12"><path d="M1.5,2.3L5.4,6L1.5,9.7Z" fill="#fff" stroke="#a6a6a6" stroke-width="1"/></svg>
<svg style="position:absolute;left:29px;top:727.06px" width="16" height="16" viewBox="0 0 24 24"><path fill="#7e57c2" fill-rule="evenodd" d="M17.45,15.18L22,7.31V19L22,21H2V3H4V15.54L9.5,6L16,9.78L20.24,2.45L21.97,3.45L16.74,12.5L10.23,8.75L4.31,19H6.57L10.96,11.44L17.45,15.18Z"/></svg>
<div class="t" style="left:53.3px;top:726.56px;color:#1a1a1a;letter-spacing:-0.333px">Reports</div>
<svg style="position:absolute;left:8.5px;top:753.02px" width="8" height="12" viewBox="0 0 8 12"><path d="M1.5,2.3L5.4,6L1.5,9.7Z" fill="#fff" stroke="#a6a6a6" stroke-width="1"/></svg>
<svg style="position:absolute;left:29px;top:751.02px" width="16" height="16" viewBox="0 0 24 24"><path fill="#e8693a" fill-rule="evenodd" d="M12,3C7.58,3 4,4.79 4,7C4,9.21 7.58,11 12,11C16.42,11 20,9.21 20,7C20,4.79 16.42,3 12,3M4,9V12C4,14.21 7.58,16 12,16C16.42,16 20,14.21 20,12V9C20,11.21 16.42,13 12,13C7.58,13 4,11.21 4,9M4,14V17C4,19.21 7.58,21 12,21C16.42,21 20,19.21 20,17V14C20,16.21 16.42,18 12,18C7.58,18 4,16.21 4,14Z"/></svg>
<div class="t" style="left:53.3px;top:750.52px;color:#1a1a1a;letter-spacing:-0.191px">Data Providers</div>
<svg style="position:absolute;left:8.5px;top:776.98px" width="8" height="12" viewBox="0 0 8 12"><path d="M1.5,2.3L5.4,6L1.5,9.7Z" fill="#fff" stroke="#a6a6a6" stroke-width="1"/></svg>
<svg style="position:absolute;left:29px;top:774.98px" width="16" height="16" viewBox="0 0 24 24"><path fill="#5a9e5a" fill-rule="evenodd" d="M10,21V18H3L8,13H5L10,8H7L12,3L17,8H14L19,13H16L21,18H14V21H10Z"/></svg>
<div class="t" style="left:53.3px;top:774.48px;color:#1a1a1a;letter-spacing:-0.203px">Directory Services</div>
<svg style="position:absolute;left:8.5px;top:800.95px" width="8" height="12" viewBox="0 0 8 12"><path d="M1.5,2.3L5.4,6L1.5,9.7Z" fill="#fff" stroke="#a6a6a6" stroke-width="1"/></svg>
<svg style="position:absolute;left:29px;top:798.95px" width="16" height="16" viewBox="0 0 24 24"><path fill="#5c6bc0" fill-rule="evenodd" d="M11.53,2C11.53,4.4 13.5,6.35 15.88,6.35H17.66V8.05C17.66,10.45 19.6,12.39 22,12.4V2.84A0.84,0.84 0 0,0 21.16,2H11.53M6.77,6.8C6.78,9.19 8.72,11.13 11.11,11.14H12.91V12.86C12.92,15.25 14.86,17.19 17.25,17.2V7.63C17.24,7.17 16.88,6.81 16.42,6.8H6.77M2,11.6C2,14 3.95,15.94 6.35,15.94H8.13V17.66C8.14,20.05 10.08,21.99 12.47,22V12.43A0.84,0.84 0 0,0 11.63,11.59L2,11.6Z"/></svg>
<div class="t" style="left:53.3px;top:798.45px;color:#1a1a1a;letter-spacing:-0.094px">Continuous Delivery Pipelines</div>
<svg style="position:absolute;left:8.5px;top:824.91px" width="8" height="12" viewBox="0 0 8 12"><path d="M1.5,2.3L5.4,6L1.5,9.7Z" fill="#fff" stroke="#a6a6a6" stroke-width="1"/></svg>
<svg style="position:absolute;left:29px;top:822.91px" width="16" height="16" viewBox="0 0 24 24"><path fill="#795548" fill-rule="evenodd" d="M14,12V19.88C14.04,20.18 13.94,20.5 13.71,20.71C13.32,21.1 12.69,21.1 12.3,20.71L10.29,18.7C10.06,18.47 9.96,18.16 10,17.87V12H9.97L4.21,4.62C3.87,4.19 3.95,3.56 4.38,3.22C4.57,3.08 4.78,3 5,3V3H19V3C19.22,3 19.43,3.08 19.62,3.22C20.05,3.56 20.13,4.19 19.79,4.62L14.03,12H14Z"/></svg>
<div class="t" style="left:53.3px;top:822.41px;color:#1a1a1a;letter-spacing:-0.282px">Filters</div>
<svg style="position:absolute;left:8.5px;top:848.87px" width="8" height="12" viewBox="0 0 8 12"><path d="M1.5,2.3L5.4,6L1.5,9.7Z" fill="#fff" stroke="#a6a6a6" stroke-width="1"/></svg>
<svg style="position:absolute;left:29px;top:846.87px" width="16" height="16" viewBox="0 0 24 24"><path fill="#f9c440" fill-rule="evenodd" d="M13,14H11V10H13M13,18H11V16H13M1,21H23L12,2L1,21Z"/></svg>
<div class="t" style="left:53.3px;top:846.37px;color:#1a1a1a;letter-spacing:-0.094px">Actions</div>
<svg style="position:absolute;left:8.5px;top:872.83px" width="8" height="12" viewBox="0 0 8 12"><path d="M1.5,2.3L5.4,6L1.5,9.7Z" fill="#fff" stroke="#a6a6a6" stroke-width="1"/></svg>
<svg style="position:absolute;left:29px;top:870.83px" width="16" height="16" viewBox="0 0 24 24"><path fill="#607d8b" fill-rule="evenodd" d="M12,2A10,10 0 0,0 2,12A10,10 0 0,0 12,22A10,10 0 0,0 22,12A10,10 0 0,0 12,2M16.2,16.2L11,13V7H12.5V12.2L17,14.9L16.2,16.2Z"/></svg>
<div class="t" style="left:53.3px;top:870.33px;color:#1a1a1a;letter-spacing:-0.372px">Schedules</div>
<svg style="position:absolute;left:8.5px;top:896.79px" width="8" height="12" viewBox="0 0 8 12"><path d="M1.5,2.3L5.4,6L1.5,9.7Z" fill="#fff" stroke="#a6a6a6" stroke-width="1"/></svg>
<svg style="position:absolute;left:29px;top:894.79px" width="16" height="16" viewBox="0 0 24 24"><path fill="#7cb342" fill-rule="evenodd" d="M6 2C4.89 2 4 2.89 4 4V20C4 21.11 4.89 22 6 22H12.68A7 7 0 0 1 12 19A7 7 0 0 1 19 12A7 7 0 0 1 20 12.08V8L14 2H6M13 3.5L18.5 9H13V3.5M18 14C17.87 14 17.76 14.09 17.74 14.21L17.55 15.53C17.25 15.66 16.96 15.82 16.7 16L15.46 15.5C15.35 15.5 15.22 15.5 15.15 15.63L14.15 17.36C14.09 17.47 14.11 17.6 14.21 17.68L15.27 18.5C15.25 18.67 15.24 18.83 15.24 19C15.24 19.17 15.25 19.33 15.27 19.5L14.21 20.32C14.12 20.4 14.09 20.53 14.15 20.64L15.15 22.37C15.21 22.5 15.34 22.5 15.46 22.5L16.7 22C16.96 22.18 17.24 22.35 17.55 22.47L17.74 23.79C17.76 23.91 17.86 24 18 24H20C20.11 24 20.22 23.91 20.24 23.79L20.43 22.47C20.73 22.34 21 22.18 21.27 22L22.5 22.5C22.63 22.5 22.76 22.5 22.83 22.37L23.83 20.64C23.89 20.53 23.86 20.4 23.77 20.32L22.7 19.5C22.72 19.33 22.74 19.17 22.74 19C22.74 18.83 22.73 18.67 22.7 18.5L23.76 17.68C23.85 17.6 23.88 17.47 23.82 17.36L22.82 15.63C22.76 15.5 22.63 15.5 22.5 15.5L21.27 16C21 15.82 20.73 15.65 20.42 15.53L20.23 14.21C20.22 14.09 20.11 14 20 14H18M19 17.5C19.83 17.5 20.5 18.17 20.5 19C20.5 19.83 19.83 20.5 19 20.5C18.16 20.5 17.5 19.83 17.5 19C17.5 18.17 18.17 17.5 19 17.5Z"/></svg>
<div class="t" style="left:53.3px;top:894.29px;color:#1a1a1a;letter-spacing:-0.385px">Syslog Server</div>
<svg style="position:absolute;left:8.5px;top:920.76px" width="8" height="12" viewBox="0 0 8 12"><path d="M1.5,2.3L5.4,6L1.5,9.7Z" fill="#fff" stroke="#a6a6a6" stroke-width="1"/></svg>
<svg style="position:absolute;left:28px;top:918.26px" width="17" height="17" viewBox="0 0 24 24" fill="none" stroke="#7cb342" stroke-width="2.2"><circle cx="13" cy="12.5" r="3.6"/><path d="M4,12.5H9.4M15.4,9.8L19,5.5M15.4,15.2L19,19.5M10.6,9.8L8,6.2"/><circle cx="3" cy="12.5" r="1.7" fill="#7cb342" stroke="none"/><circle cx="19.8" cy="4.6" r="2" fill="#7cb342" stroke="none"/><circle cx="19.8" cy="20.2" r="2" fill="#7cb342" stroke="none"/><circle cx="7.4" cy="5.4" r="1.9" fill="#7cb342" stroke="none"/></svg>
<div class="t" style="left:53.3px;top:918.26px;color:#1a1a1a;letter-spacing:-0.362px">SNMP Trap Server</div>
<svg style="position:absolute;left:29px;top:942.72px" width="16" height="16" viewBox="0 0 24 24"><path fill="#7cb342" fill-rule="evenodd" d="M9,16V10H5L12,3L19,10H15V16H9M5,20V18H19V20H5Z"/></svg>
<div class="t" style="left:53.3px;top:942.22px;color:#1a1a1a;letter-spacing:-0.196px">Agent Server</div>
<svg style="position:absolute;left:29px;top:966.68px" width="16" height="16" viewBox="0 0 24 24"><path fill="#757575" fill-rule="evenodd" d="M6 2C4.89 2 4 2.89 4 4V20C4 21.11 4.89 22 6 22H12.68A7 7 0 0 1 12 19A7 7 0 0 1 19 12A7 7 0 0 1 20 12.08V8L14 2H6M13 3.5L18.5 9H13V3.5M18 14C17.87 14 17.76 14.09 17.74 14.21L17.55 15.53C17.25 15.66 16.96 15.82 16.7 16L15.46 15.5C15.35 15.5 15.22 15.5 15.15 15.63L14.15 17.36C14.09 17.47 14.11 17.6 14.21 17.68L15.27 18.5C15.25 18.67 15.24 18.83 15.24 19C15.24 19.17 15.25 19.33 15.27 19.5L14.21 20.32C14.12 20.4 14.09 20.53 14.15 20.64L15.15 22.37C15.21 22.5 15.34 22.5 15.46 22.5L16.7 22C16.96 22.18 17.24 22.35 17.55 22.47L17.74 23.79C17.76 23.91 17.86 24 18 24H20C20.11 24 20.22 23.91 20.24 23.79L20.43 22.47C20.73 22.34 21 22.18 21.27 22L22.5 22.5C22.63 22.5 22.76 22.5 22.83 22.37L23.83 20.64C23.89 20.53 23.86 20.4 23.77 20.32L22.7 19.5C22.72 19.33 22.74 19.17 22.74 19C22.74 18.83 22.73 18.67 22.7 18.5L23.76 17.68C23.85 17.6 23.88 17.47 23.82 17.36L22.82 15.63C22.76 15.5 22.63 15.5 22.5 15.5L21.27 16C21 15.82 20.73 15.65 20.42 15.53L20.23 14.21C20.22 14.09 20.11 14 20 14H18M19 17.5C19.83 17.5 20.5 18.17 20.5 19C20.5 19.83 19.83 20.5 19 20.5C18.16 20.5 17.5 19.83 17.5 19C17.5 18.17 18.17 17.5 19 17.5Z"/></svg>
<div class="t" style="left:53.3px;top:966.18px;color:#1a1a1a;letter-spacing:-0.334px">Service Log File</div>
<svg style="position:absolute;left:8.5px;top:992.64px" width="8" height="12" viewBox="0 0 8 12"><path d="M1.5,2.3L5.4,6L1.5,9.7Z" fill="#fff" stroke="#a6a6a6" stroke-width="1"/></svg>
<svg style="position:absolute;left:29px;top:990.64px" width="16" height="16" viewBox="0 0 24 24"><path fill="#757575" fill-rule="evenodd" d="M12,8A4,4 0 0,1 16,12A4,4 0 0,1 12,16A4,4 0 0,1 8,12A4,4 0 0,1 12,8M12,10A2,2 0 0,0 10,12A2,2 0 0,0 12,14A2,2 0 0,0 14,12A2,2 0 0,0 12,10M10,22C9.75,22 9.54,21.82 9.5,21.58L9.13,18.93C8.5,18.68 7.96,18.34 7.44,17.94L4.95,18.95C4.73,19.03 4.46,18.95 4.34,18.73L2.34,15.27C2.21,15.05 2.27,14.78 2.46,14.63L4.57,12.97L4.5,12L4.57,11L2.46,9.37C2.27,9.22 2.21,8.95 2.34,8.73L4.34,5.27C4.46,5.05 4.73,4.96 4.95,5.05L7.44,6.05C7.96,5.66 8.5,5.32 9.13,5.07L9.5,2.42C9.54,2.18 9.75,2 10,2H14C14.25,2 14.46,2.18 14.5,2.42L14.87,5.07C15.5,5.32 16.04,5.66 16.56,6.05L19.05,5.05C19.27,4.96 19.54,5.05 19.66,5.27L21.66,8.73C21.79,8.95 21.73,9.22 21.54,9.37L19.43,11L19.5,12L19.43,13L21.54,14.63C21.73,14.78 21.79,15.05 21.66,15.27L19.66,18.73C19.54,18.95 19.27,19.04 19.05,18.95L16.56,17.95C16.04,18.34 15.5,18.68 14.87,18.93L14.5,21.58C14.46,21.82 14.25,22 14,22H10M11.25,4L10.88,6.61C9.68,6.86 8.62,7.5 7.85,8.39L5.44,7.35L4.69,8.65L6.8,10.2C6.4,11.37 6.4,12.64 6.8,13.8L4.68,15.36L5.43,16.66L7.86,15.62C8.63,16.5 9.68,17.14 10.87,17.38L11.24,20H12.76L13.13,17.39C14.32,17.14 15.37,16.5 16.14,15.62L18.57,16.66L19.32,15.36L17.2,13.81C17.6,12.64 17.6,11.37 17.2,10.2L19.31,8.65L18.56,7.35L16.15,8.39C15.38,7.5 14.32,6.86 13.12,6.62L12.75,4H11.25Z"/></svg>
<div class="t" style="left:53.3px;top:990.14px;color:#1a1a1a;letter-spacing:-0.094px">Options</div>
<svg style="position:absolute;left:29px;top:1014.6px" width="16" height="16" viewBox="0 0 24 24"><path fill="#757575" fill-rule="evenodd" d="M7,14A2,2 0 0,1 5,12A2,2 0 0,1 7,10A2,2 0 0,1 9,12A2,2 0 0,1 7,14M12.65,10C11.83,7.67 9.61,6 7,6A6,6 0 0,0 1,12A6,6 0 0,0 7,18C9.61,18 11.83,16.33 12.65,14H17V18H21V14H23V10H12.65Z"/></svg>
<div class="t" style="left:53.3px;top:1014.1px;color:#1a1a1a;letter-spacing:-0.525px">License</div>
</div>
<!-- tree v-scrollbar -->
<div class="abs" style="left:314px;top:153px;width:17px;height:1052px;background:#fbfbfb"></div>
<svg style="position:absolute;left:316.5px;top:156.5px" width="11.0" height="11.0" viewBox="0 0 12 12"><path d="M1.5,8L6,3.5L10.5,8" fill="none" stroke="#666" stroke-width="1.3"/></svg>
<div class="abs" style="left:320px;top:464px;width:5px;height:706px;background:#cfd0d3;border-radius:3px"></div>
<svg style="position:absolute;left:316.5px;top:1172.5px" width="12.0" height="12.0" viewBox="0 0 12 12"><path d="M1.5,3.5L6,8L10.5,3.5" fill="none" stroke="#555" stroke-width="1.3"/></svg>
<!-- tree h-scrollbar -->
<div class="abs" style="left:9px;top:1188px;width:305px;height:17px;background:#fbfbfb"></div>
<svg class="abs" style="left:13px;top:1191px" width="8" height="12" viewBox="0 0 8 12"><path d="M6.5,1L1.5,6L6.5,11" fill="none" stroke="#555" stroke-width="1.2"/></svg>
<svg class="abs" style="left:301px;top:1191px" width="8" height="12" viewBox="0 0 8 12"><path d="M1.5,1L6.5,6L1.5,11" fill="none" stroke="#555" stroke-width="1.2"/></svg>
<div class="abs" style="left:26px;top:1194px;width:211px;height:5px;background:#cfd0d3;border-radius:3px"></div>

<!-- Service Output -->
<div class="t" style="left:7.1px;top:1214.5px;color:#333;letter-spacing:-0.091px">Service Output</div>
<div class="abs" style="left:7px;top:1233px;width:78px;height:6px;background:#c4c5c9"></div>

<!-- document tab -->
<div class="abs" style="left:339px;top:61px;width:128px;height:23px;background:#ca3308;border-radius:3px 3px 0 0"></div>
<div class="abs" style="left:339px;top:83px;width:1240px;height:2px;background:#9a3411;box-shadow:0 1px 0 #f7e3dc"></div>
<div class="t" style="left:345.0px;top:65.0px;color:#fff;letter-spacing:-0.553px">SFTP/SSH Log File</div>
<svg class="abs" style="left:451px;top:69px" width="9" height="9" viewBox="0 0 9 9"><path d="M0.3,0.3L8.7,8.7M8.7,0.3L0.3,8.7" stroke="#fff" stroke-width="1.1"/></svg>
<svg style="position:absolute;left:1564.5px;top:68.0px" width="10.0" height="10.0" viewBox="0 0 12 12"><path d="M1.5,3.5L6,8L10.5,3.5" fill="none" stroke="#555" stroke-width="1.3"/></svg>
<!-- content panel -->
<div class="abs" style="left:339px;top:85px;width:1240px;height:1122px;background:#fafafa;border:1px solid #e0e0e0;border-top:none"></div>
<!-- banner -->
<div class="abs" style="left:349px;top:95px;width:1220px;height:62px;background:#e54c1b;border:1px solid #c9552c"></div>
<svg style="position:absolute;left:364.85px;top:100.75px;opacity:1.0" width="56.4" height="56.4" viewBox="0 0 24 24"><path fill="#f4b09a" d="M9,3H3C1.9,3 1,3.9 1,5V17A2,2 0 0,0 3,19H19A2,2 0 0,0 21,17V7C21,5.9 20.1,5 19,5H11L9,3Z"/><circle cx="16.66" cy="16" r="6.26" fill="#f4b09a"/><circle cx="16.66" cy="16" r="4.9" fill="#e54c1b"/><path d="M15.7,11.6V15.5L18.8,17.4" stroke="#f4b09a" stroke-width="1.3" fill="none"/></svg>
<div class="t" style="left:437.9px;top:103.0px;font-size:20.0px;color:#fff;line-height:28.0px;letter-spacing:-0.101px">Text Log Consolidation - Template Properties</div>
<div class="t" style="left:437.9px;top:128.5px;font-size:14.0px;color:#fff;line-height:20.0px;letter-spacing:-0.108px">Configure log consolidation (e.g. Schedule Server Manager to download the latest Security Event Log entries and save to Microsoft SQL Server or MySQL).</div>
<svg class="abs" style="left:1522px;top:111px" width="30" height="30" viewBox="0 0 30 30"><path d="M17.5,4.3A11,11 0 1,1 12.5,4.3" fill="none" stroke="#f4b09a" stroke-width="3"/></svg>

<!-- tab page -->
<div class="abs" style="left:352px;top:204px;width:897px;height:932px;background:#fff;border:1px solid #a8a8a8"></div>
<div class="tab" style="left:354px;width:53px"></div>
<div class="tab" style="left:407px;width:36px"></div>
<div class="tab" style="left:528px;width:39px"></div>
<div class="tab" style="left:567px;width:55px"></div>
<div class="tab" style="left:622px;width:51px"></div>
<div class="tab" style="left:442px;width:87px;top:182px;height:23px;background:#fff"></div>
<div class="t" style="left:360.2px;top:185.5px;color:#222;letter-spacing:-0.343px">General</div>
<div class="t" style="left:413.1px;top:185.5px;color:#222;letter-spacing:-0.383px">Logs</div>
<div class="t" style="left:450.2px;top:184.5px;color:#222;letter-spacing:-0.208px">Read Options</div>
<div class="t" style="left:533.4px;top:185.5px;color:#222;letter-spacing:-0.577px">Rules</div>
<div class="t" style="left:573.8px;top:185.5px;color:#222;letter-spacing:0.269px">Monitor</div>
<div class="t" style="left:628.3px;top:185.5px;color:#222;letter-spacing:-0.080px">Actions</div>

<!-- form -->
<div class="t" style="left:374.1px;top:230.5px;letter-spacing:-0.410px">Log</div>
<div class="combo" style="left:373px;top:251px;width:400px;height:28px"></div>
<div class="t" style="left:378.7px;top:256.5px;letter-spacing:-0.192px">./SSH Tests/server.log</div>
<svg style="position:absolute;left:753.0px;top:259.0px" width="13.0" height="13.0" viewBox="0 0 12 12"><path d="M1.5,3.5L6,8L10.5,3.5" fill="none" stroke="#222" stroke-width="1.6"/></svg>
<!-- inner scroll -->
<div class="abs" style="left:1215px;top:295px;width:17px;height:824px;background:#fbfbfb"></div>
<svg style="position:absolute;left:1216.5px;top:297.7px" width="12.0" height="12.0" viewBox="0 0 12 12"><path d="M1.5,8L6,3.5L10.5,8" fill="none" stroke="#555" stroke-width="1.3"/></svg>
<div class="abs" style="left:1221px;top:312px;width:5px;height:771px;background:#cfd0d3;border-radius:3px"></div>
<svg style="position:absolute;left:1216.5px;top:1104.0px" width="12.0" height="12.0" viewBox="0 0 12 12"><path d="M1.5,3.5L6,8L10.5,3.5" fill="none" stroke="#555" stroke-width="1.3"/></svg>

<div class="t" style="left:374.1px;top:303.5px;letter-spacing:-0.089px">Logical filename</div>
<div class="inp" style="left:373px;top:325px;width:840px;height:28px"></div>
<div class="t" style="left:380.4px;top:330.5px;letter-spacing:-0.462px">My SFTP/SSH Log File</div>

<div class="abs" style="left:374px;top:378px;width:13px;height:13px;border:1px solid #333;background:#fff"></div>
<svg class="abs" style="left:375px;top:379px" width="11" height="11" viewBox="0 0 11 11"><path d="M1.5,5.5L4.2,8.5L9.5,2" fill="none" stroke="#111" stroke-width="1.6"/></svg>
<div class="t" style="left:393.3px;top:375.5px;letter-spacing:0.015px">Enable entry pattern recognition</div>
<div class="combo" style="left:373px;top:400px;width:200px;height:28px"></div>
<div class="t" style="left:379.2px;top:405.5px;letter-spacing:-0.084px">Entries start with</div>
<svg style="position:absolute;left:553.0px;top:408.0px" width="13.0" height="13.0" viewBox="0 0 12 12"><path d="M1.5,3.5L6,8L10.5,3.5" fill="none" stroke="#222" stroke-width="1.6"/></svg>

<div class="inp" style="left:373px;top:444px;width:776px;height:28px;border-color:#c1643b;border-radius:2px"></div>
<div class="t" style="left:379.9px;top:450.0px;letter-spacing:0.230px">(&lt;Info&gt;&#124;&lt;Notice&gt;&#124;&lt;Warning&gt;&#124;&lt;Critical&gt;&#124;&lt;Error&gt;)</div>
<div class="btn" style="left:1153.0px;top:444.0px;width:28px;height:28px;background:#efefef;border-color:#d2d2d2"><svg style="position:absolute;left:1.0px;top:1.0px" width="24" height="24" viewBox="0 0 24 24"><path fill="#484848" fill-rule="evenodd" d="M20.06,18C20,17.83 19.91,17.54 19.86,17.11C19.19,17.81 18.38,18.16 17.45,18.16C16.62,18.16 15.93,17.92 15.4,17.45C14.87,17 14.6,16.39 14.6,15.66C14.6,14.78 14.93,14.1 15.6,13.61C16.27,13.12 17.21,12.88 18.43,12.88H19.83V12.24C19.83,11.75 19.68,11.36 19.38,11.07C19.08,10.78 18.63,10.64 18.05,10.64C17.53,10.64 17.1,10.76 16.75,11C16.4,11.25 16.23,11.54 16.23,11.89H14.77C14.77,11.46 14.92,11.05 15.22,10.65C15.5,10.25 15.93,9.94 16.44,9.71C16.95,9.5 17.5,9.36 18.13,9.36C19.11,9.36 19.87,9.6 20.42,10.09C20.97,10.58 21.26,11.25 21.28,12.11V16C21.28,16.8 21.38,17.42 21.58,17.88V18H20.06M17.66,16.88C18.11,16.88 18.54,16.77 18.95,16.56C19.35,16.35 19.65,16.07 19.83,15.73V14.16H18.7C16.93,14.16 16.04,14.63 16.04,15.57C16.04,16 16.19,16.3 16.5,16.53C16.8,16.76 17.18,16.88 17.66,16.88M5.46,13.71H9.53L7.5,8.29L5.46,13.71M6.64,6H8.36L13.07,18H11.14L10.17,15.43H4.82L3.86,18H1.93L6.64,6Z"/></svg></div>
<div class="btn" style="left:1185.0px;top:444.0px;width:28px;height:28px;background:#bfe0fb;border-color:#b5d6f1"><svg style="position:absolute;left:1.0px;top:1.0px" width="24" height="24" viewBox="0 0 24 24"><path fill="#484848" fill-rule="evenodd" d="M16,16.92C15.67,16.97 15.34,17 15,17C14.66,17 14.33,16.97 14,16.92V13.41L11.5,15.89C11,15.5 10.5,15 10.11,14.5L12.59,12H9.08C9.03,11.67 9,11.34 9,11C9,10.66 9.03,10.33 9.08,10H12.59L10.11,7.5C10.3,7.25 10.5,7 10.76,6.76V6.76C11,6.5 11.25,6.3 11.5,6.11L14,8.59V5.08C14.33,5.03 14.66,5 15,5C15.34,5 15.67,5.03 16,5.08V8.59L18.5,6.11C19,6.5 19.5,7 19.89,7.5L17.41,10H20.92C20.97,10.33 21,10.66 21,11C21,11.34 20.97,11.67 20.92,12H17.41L19.89,14.5C19.7,14.75 19.5,15 19.24,15.24V15.24C19,15.5 18.75,15.7 18.5,15.89L16,13.41V16.92M5,19A2,2 0 0,1 7,17A2,2 0 0,1 9,19A2,2 0 0,1 7,21A2,2 0 0,1 5,19H5Z"/></svg></div>

<div class="t" style="left:374.3px;top:496.5px;letter-spacing:-0.168px">Read method</div>
<div class="combo" style="left:373px;top:518px;width:200px;height:28px"></div>
<div class="t" style="left:379.2px;top:523.5px;letter-spacing:-0.064px">Beginning of File</div>
<svg style="position:absolute;left:553.0px;top:526.0px" width="13.0" height="13.0" viewBox="0 0 12 12"><path d="M1.5,3.5L6,8L10.5,3.5" fill="none" stroke="#222" stroke-width="1.6"/></svg>

<div class="abs" style="left:374px;top:571px;width:13px;height:13px;border:1px solid #333;background:#fff"></div>
<div class="t" style="left:393.3px;top:568.5px;letter-spacing:-0.176px">Open as Unicode</div>

<div class="t" style="left:374.3px;top:601.5px;letter-spacing:-0.033px">Test host, device or endpoint</div>
<div class="combo" style="left:373px;top:623px;width:402px;height:28px;background:#efefef;border-color:#d0d0d0"></div>
<div class="t" style="left:382.4px;top:628.5px;letter-spacing:-0.410px">192.168.0.2</div>
<svg style="position:absolute;left:747.0px;top:631.0px" width="13.0" height="13.0" viewBox="0 0 12 12"><path d="M1.5,3.5L6,8L10.5,3.5" fill="none" stroke="#333" stroke-width="1.6"/></svg>
<div class="btn" style="left:779.0px;top:623.0px;width:28px;height:28px;background:#efefef;border-color:#d2d2d2"><svg style="position:absolute;left:1.0px;top:1.0px" width="24" height="24" viewBox="0 0 24 24"><path fill="#484848" fill-rule="evenodd" d="M19,13H13V19H11V13H5V11H11V5H13V11H19V13Z"/></svg></div>
<div class="btn" style="left:811.0px;top:623.0px;width:28px;height:28px;background:#efefef;border-color:#d2d2d2"><svg style="position:absolute;left:1.0px;top:1.0px" width="24" height="24" viewBox="0 0 24 24"><path fill="#484848" fill-rule="evenodd" d="M20.71,7.04C21.1,6.65 21.1,6 20.71,5.63L18.37,3.29C18,2.9 17.35,2.9 16.96,3.29L15.12,5.12L18.87,8.87M3,17.25V21H6.75L17.81,9.93L14.06,6.18L3,17.25Z"/></svg></div>
<div class="btn" style="left:843.0px;top:623.0px;width:28px;height:28px;background:#efefef;border-color:#d2d2d2"><svg style="position:absolute;left:1.0px;top:1.0px" width="24" height="24" viewBox="0 0 24 24"><path fill="#484848" fill-rule="evenodd" d="M19,19V5H5V19H19M19,3A2,2 0 0,1 21,5V19A2,2 0 0,1 19,21H5A2,2 0 0,1 3,19V5C3,3.89 3.9,3 5,3H19M17,11V13H7V11H17Z"/></svg></div>

<div class="rbtn" style="left:373px;top:671px;width:80px;height:26px"></div>
<div class="t" style="left:402.9px;top:676.0px;font-size:13.0px;color:#fff;letter-spacing:-0.861px">Test</div>

<!-- verbose output -->
<div class="abs" style="left:369px;top:717px;width:846px;height:33px;background:#e4e4e4"></div>
<div class="t" style="left:377.1px;top:724.0px;font-size:14.0px;color:#222;line-height:18.0px">Verbose Output</div>
<div class="btn" style="left:491.0px;top:719.0px;width:28px;height:28px;background:#e8e8e8;border-color:#dadada"><svg style="position:absolute;left:1.0px;top:1.0px" width="24" height="24" viewBox="0 0 24 24"><path fill="#bdbdbd" fill-rule="evenodd" d="M19,21H8V7H19M19,5H8A2,2 0 0,0 6,7V21A2,2 0 0,0 8,23H19A2,2 0 0,0 21,21V7A2,2 0 0,0 19,5M16,1H4A2,2 0 0,0 2,3V17H4V3H16V1Z"/></svg></div>
<div class="btn" style="left:523.0px;top:719.0px;width:28px;height:28px;background:#efefef;border-color:#d2d2d2"><svg style="position:absolute;left:1.0px;top:1.0px" width="24" height="24" viewBox="0 0 24 24"><path fill="#484848" fill-rule="evenodd" d="M6,19A2,2 0 0,0 8,21H16A2,2 0 0,0 18,19V7H6V19M8,9H16V19H8V9M15.5,4L14.5,3H9.5L8.5,4H5V6H19V4H15.5Z"/></svg></div>
<div class="abs" style="left:369px;top:749px;width:846px;height:370px;background:#fff;border:1px solid #9a9a9a;border-bottom:none;border-right-color:#b5b5b5"></div>
<div class="abs" style="left:370px;top:750px;width:844px;height:28px;background:#f5f5f5;border-bottom:1px solid #d9d9d9"></div>
<div class="abs" style="left:400px;top:750px;width:1px;height:27px;background:#dcdcdc"></div>
<div class="abs" style="left:568px;top:750px;width:1px;height:27px;background:#dcdcdc"></div>
<div class="abs" style="left:1211px;top:750px;width:1px;height:27px;background:#dcdcdc"></div>
<div class="t" style="left:408.1px;top:755.5px;letter-spacing:-0.184px">Time</div>
<div class="t" style="left:576.6px;top:755.5px;letter-spacing:-0.400px">Message</div>
<svg style="position:absolute;left:376.2px;top:780.4px" width="19.5" height="19.5" viewBox="0 0 24 24"><path fill="#616161" fill-rule="evenodd" d="M13,9H11V7H13M13,17H11V11H13M12,2A10,10 0 0,0 2,12A10,10 0 0,0 12,22A10,10 0 0,0 22,12A10,10 0 0,0 12,2Z"/></svg>
<div class="t" style="left:410px;top:781.5px;letter-spacing:0.099px">09/28/2021 </div>
<div class="t" style="left:474.5px;top:781.5px;letter-spacing:-0.217px">09:06:24.872 AM</div>
<div class="t" style="left:578px;top:781.5px;letter-spacing:-0.016px">Testing entry pattern...&nbsp; </div>
<div class="t" style="left:703px;top:781.5px;letter-spacing:-0.285px">Host: 192.168.0.2&nbsp; </div>
<div class="t" style="left:799px;top:781.5px;letter-spacing:-0.220px">Mask: ./SSH Tests/server.log</div>
<svg style="position:absolute;left:376.2px;top:804.4px" width="19.5" height="19.5" viewBox="0 0 24 24"><path fill="#616161" fill-rule="evenodd" d="M13,9H11V7H13M13,17H11V11H13M12,2A10,10 0 0,0 2,12A10,10 0 0,0 12,22A10,10 0 0,0 22,12A10,10 0 0,0 12,2Z"/></svg>
<div class="t" style="left:410px;top:805.5px;letter-spacing:0.099px">09/28/2021 </div>
<div class="t" style="left:474.5px;top:805.5px;letter-spacing:-0.217px">09:06:25.383 AM</div>
<div class="t" style="left:578px;top:805.5px;letter-spacing:-0.132px">Discovered files.&nbsp; </div>
<div class="t" style="left:670.2px;top:805.5px;letter-spacing:-0.083px">Count: 1&nbsp; </div>
<div class="t" style="left:721.4px;top:805.5px;letter-spacing:-0.260px">Path: ./SSH Tests/server.log</div>
<svg style="position:absolute;left:376.2px;top:828.4px" width="19.5" height="19.5" viewBox="0 0 24 24"><path fill="#1976d2" fill-rule="evenodd" d="M13,9H11V7H13M13,17H11V11H13M12,2A10,10 0 0,0 2,12A10,10 0 0,0 12,22A10,10 0 0,0 22,12A10,10 0 0,0 12,2Z"/></svg>
<div class="t" style="left:410px;top:829.5px;letter-spacing:0.099px">09/28/2021 </div>
<div class="t" style="left:474.5px;top:829.5px;letter-spacing:-0.217px">09:06:25.886 AM</div>
<div class="t" style="left:578px;top:829.5px;letter-spacing:0.077px">&lt;Info&gt; 09/26/2021 15:53:44 </div>
<div class="t" style="left:730.9px;top:829.5px;letter-spacing:-0.138px">[T01] Corner Bowl Server Manager started</div>
<svg style="position:absolute;left:376.2px;top:852.4px" width="19.5" height="19.5" viewBox="0 0 24 24"><path fill="#1976d2" fill-rule="evenodd" d="M13,9H11V7H13M13,17H11V11H13M12,2A10,10 0 0,0 2,12A10,10 0 0,0 12,22A10,10 0 0,0 22,12A10,10 0 0,0 12,2Z"/></svg>
<div class="t" style="left:410px;top:853.5px;letter-spacing:0.099px">09/28/2021 </div>
<div class="t" style="left:474.5px;top:853.5px;letter-spacing:-0.217px">09:06:25.886 AM</div>
<div class="t" style="left:578px;top:853.5px;letter-spacing:0.077px">&lt;Info&gt; 09/26/2021 15:53:44 </div>
<div class="t" style="left:730.9px;top:853.5px;letter-spacing:-0.434px">[T01] Running as SYSTEM</div>
<svg style="position:absolute;left:376.2px;top:876.4px" width="19.5" height="19.5" viewBox="0 0 24 24"><path fill="#1976d2" fill-rule="evenodd" d="M13,9H11V7H13M13,17H11V11H13M12,2A10,10 0 0,0 2,12A10,10 0 0,0 12,22A10,10 0 0,0 22,12A10,10 0 0,0 12,2Z"/></svg>
<div class="t" style="left:410px;top:877.5px;letter-spacing:0.099px">09/28/2021 </div>
<div class="t" style="left:474.5px;top:877.5px;letter-spacing:-0.217px">09:06:25.886 AM</div>
<div class="t" style="left:578px;top:877.5px;letter-spacing:0.077px">&lt;Info&gt; 09/26/2021 15:53:44 </div>
<div class="t" style="left:730.9px;top:877.5px;letter-spacing:-0.108px">[T04] Initializing...</div>
<svg style="position:absolute;left:376.2px;top:900.4px" width="19.5" height="19.5" viewBox="0 0 24 24"><path fill="#1976d2" fill-rule="evenodd" d="M13,9H11V7H13M13,17H11V11H13M12,2A10,10 0 0,0 2,12A10,10 0 0,0 12,22A10,10 0 0,0 22,12A10,10 0 0,0 12,2Z"/></svg>
<div class="t" style="left:410px;top:901.5px;letter-spacing:0.099px">09/28/2021 </div>
<div class="t" style="left:474.5px;top:901.5px;letter-spacing:-0.217px">09:06:25.886 AM</div>
<div class="t" style="left:578px;top:901.5px;letter-spacing:0.077px">&lt;Info&gt; 09/26/2021 15:53:44 </div>
<div class="t" style="left:730.9px;top:901.5px;letter-spacing:-0.253px">[T04] Execution Mode: Release</div>
<svg style="position:absolute;left:376.2px;top:924.4px" width="19.5" height="19.5" viewBox="0 0 24 24"><path fill="#1976d2" fill-rule="evenodd" d="M13,9H11V7H13M13,17H11V11H13M12,2A10,10 0 0,0 2,12A10,10 0 0,0 12,22A10,10 0 0,0 22,12A10,10 0 0,0 12,2Z"/></svg>
<div class="t" style="left:410px;top:925.5px;letter-spacing:0.099px">09/28/2021 </div>
<div class="t" style="left:474.5px;top:925.5px;letter-spacing:-0.217px">09:06:25.886 AM</div>
<div class="t" style="left:578px;top:925.5px;letter-spacing:0.077px">&lt;Info&gt; 09/26/2021 15:53:44 </div>
<div class="t" style="left:730.9px;top:925.5px;letter-spacing:-0.228px">[T06] Server - Listening on 0.0.0.0:21843...</div>
<svg style="position:absolute;left:376.2px;top:948.4px" width="19.5" height="19.5" viewBox="0 0 24 24"><path fill="#1976d2" fill-rule="evenodd" d="M13,9H11V7H13M13,17H11V11H13M12,2A10,10 0 0,0 2,12A10,10 0 0,0 12,22A10,10 0 0,0 22,12A10,10 0 0,0 12,2Z"/></svg>
<div class="t" style="left:410px;top:949.5px;letter-spacing:0.099px">09/28/2021 </div>
<div class="t" style="left:474.5px;top:949.5px;letter-spacing:-0.217px">09:06:25.886 AM</div>
<div class="t" style="left:578px;top:949.5px;letter-spacing:0.077px">&lt;Info&gt; 09/26/2021 15:53:44 </div>
<div class="t" style="left:730.9px;top:949.5px;letter-spacing:-0.079px">[T04] Initializing object...&nbsp; ID: </div>
<div class="t" style="left:882.3px;top:949.5px;letter-spacing:-0.551px">7B7E4E00DF214DA59E357AC32F119DC0</div>
<div class="t" style="left:1096.6px;top:949.5px;letter-spacing:-0.134px">&nbsp; Name: Log</div>
<div class="t" style="left:578px;top:965.5px;letter-spacing:-0.188px">Object...</div>
<svg style="position:absolute;left:376.2px;top:988.4px" width="19.5" height="19.5" viewBox="0 0 24 24"><path fill="#1976d2" fill-rule="evenodd" d="M13,9H11V7H13M13,17H11V11H13M12,2A10,10 0 0,0 2,12A10,10 0 0,0 12,22A10,10 0 0,0 22,12A10,10 0 0,0 12,2Z"/></svg>
<div class="t" style="left:410px;top:989.5px;letter-spacing:0.099px">09/28/2021 </div>
<div class="t" style="left:474.5px;top:989.5px;letter-spacing:-0.217px">09:06:25.886 AM</div>
<div class="t" style="left:578px;top:989.5px;letter-spacing:0.077px">&lt;Info&gt; 09/26/2021 15:53:44 </div>
<div class="t" style="left:730.9px;top:989.5px;letter-spacing:-0.065px">[T04] Log Object: Starting NaglesAlgorithm thread...</div>
<svg style="position:absolute;left:376.2px;top:1012.4px" width="19.5" height="19.5" viewBox="0 0 24 24"><path fill="#1976d2" fill-rule="evenodd" d="M13,9H11V7H13M13,17H11V11H13M12,2A10,10 0 0,0 2,12A10,10 0 0,0 12,22A10,10 0 0,0 22,12A10,10 0 0,0 12,2Z"/></svg>
<div class="t" style="left:410px;top:1013.5px;letter-spacing:0.099px">09/28/2021 </div>
<div class="t" style="left:474.5px;top:1013.5px;letter-spacing:-0.217px">09:06:25.886 AM</div>
<div class="t" style="left:578px;top:1013.5px;letter-spacing:0.077px">&lt;Info&gt; 09/26/2021 15:53:44 </div>
<div class="t" style="left:730.9px;top:1013.5px;letter-spacing:-0.079px">[T04] Initializing object...&nbsp; ID: </div>
<div class="t" style="left:882.3px;top:1013.5px;letter-spacing:-0.494px">6C8320BB9179463CBACD51764101CF61</div>
<div class="t" style="left:1096px;top:1013.5px;letter-spacing:-0.150px">&nbsp; Name: Licensing</div>
<div class="t" style="left:578px;top:1029.5px;letter-spacing:-0.188px">Object...</div>
<svg style="position:absolute;left:376.2px;top:1052.4px" width="19.5" height="19.5" viewBox="0 0 24 24"><path fill="#1976d2" fill-rule="evenodd" d="M13,9H11V7H13M13,17H11V11H13M12,2A10,10 0 0,0 2,12A10,10 0 0,0 12,22A10,10 0 0,0 22,12A10,10 0 0,0 12,2Z"/></svg>
<div class="t" style="left:410px;top:1053.5px;letter-spacing:0.099px">09/28/2021 </div>
<div class="t" style="left:474.5px;top:1053.5px;letter-spacing:-0.217px">09:06:25.886 AM</div>
<div class="t" style="left:578px;top:1053.5px;letter-spacing:0.077px">&lt;Info&gt; 09/26/2021 15:53:44 </div>
<div class="t" style="left:730.9px;top:1053.5px;letter-spacing:-0.052px">[T04] Licensing Object: Retrieving computer information...</div>
<svg style="position:absolute;left:376.2px;top:1076.4px" width="19.5" height="19.5" viewBox="0 0 24 24"><path fill="#1976d2" fill-rule="evenodd" d="M13,9H11V7H13M13,17H11V11H13M12,2A10,10 0 0,0 2,12A10,10 0 0,0 12,22A10,10 0 0,0 22,12A10,10 0 0,0 12,2Z"/></svg>
<div class="t" style="left:410px;top:1077.5px;letter-spacing:0.099px">09/28/2021 </div>
<div class="t" style="left:474.5px;top:1077.5px;letter-spacing:-0.217px">09:06:25.886 AM</div>
<div class="t" style="left:578px;top:1077.5px;letter-spacing:0.077px">&lt;Info&gt; 09/26/2021 15:53:44 </div>
<div class="t" style="left:730.9px;top:1077.5px;letter-spacing:-0.116px">[T04] Licensing Object: Discovered license file C:\ProgramData\Corner Bowl\Server</div>
<div class="t" style="left:578px;top:1093.5px;letter-spacing:-0.210px">Manager 2022\Licenses\sm_license.xml.</div>
<div class="abs" style="left:385px;top:1117px;width:2px;height:1px;background:#f3d98a"></div>

<!-- bottom buttons -->
<div class="rbtn" style="left:364px;top:1156px;width:80px;height:26px"></div>
<div class="t" style="left:391.6px;top:1161.0px;font-size:13.0px;color:#fff;letter-spacing:-1.335px">Save</div>
<div class="rbtn" style="left:1386px;top:1156px;width:80px;height:26px"></div>
<div class="t" style="left:1408.9px;top:1161.0px;font-size:13.0px;color:#fff;letter-spacing:-0.596px">Delete</div>
<div class="rbtn" style="left:1474px;top:1156px;width:80px;height:26px"></div>
<div class="t" style="left:1499.6px;top:1161.0px;font-size:13.0px;color:#fff;letter-spacing:-0.950px">Close</div>

<!-- splitter -->
<div class="abs" style="left:1253px;top:182px;width:10px;height:954px;background:#e3e3e3;border:1px solid #eed3c9"></div>

<!-- side -->
<svg style="position:absolute;left:1267px;top:195.2px" width="24" height="24" viewBox="0 0 24 24"><path fill="#1482ca" fill-rule="evenodd" d="M4,1H20A1,1 0 0,1 21,2V6A1,1 0 0,1 20,7H4A1,1 0 0,1 3,6V2A1,1 0 0,1 4,1M4,9H20A1,1 0 0,1 21,10V14A1,1 0 0,1 20,15H4A1,1 0 0,1 3,14V10A1,1 0 0,1 4,9M4,17H20A1,1 0 0,1 21,18V22A1,1 0 0,1 20,23H4A1,1 0 0,1 3,22V18A1,1 0 0,1 4,17M9,5H10V3H9V5M9,13H10V11H9V13M9,21H10V19H9V21M5,3V5H7V3H5M5,11V13H7V11H5M5,19V21H7V19H5Z"/></svg>
<div class="t" style="left:1299px;top:198.0px;font-size:14px;font-weight:bold;color:#111;line-height:18px;letter-spacing:-0.381px">Hosts</div>
<div class="combo" style="left:1267px;top:225px;width:265px;height:28px;background:#efefef;border-color:#d0d0d0"></div>
<div class="t" style="left:1276px;top:231px;color:#444;letter-spacing:-0.043px">Select from list</div>
<svg style="position:absolute;left:1504.0px;top:232.5px" width="13" height="13" viewBox="0 0 12 12"><path d="M1.5,3.5L6,8L10.5,3.5" fill="none" stroke="#333" stroke-width="1.6"/></svg>
<div class="btn" style="left:1536px;top:224px;width:28px;height:28px;background:#efefef;border-color:#d2d2d2"><svg style="position:absolute;left:1.0px;top:1.0px" width="24" height="24" viewBox="0 0 24 24"><path fill="#484848" fill-rule="evenodd" d="M19,13H13V19H11V13H5V11H11V5H13V11H19V13Z"/></svg></div>
<div style="position:absolute;left:1267px;top:257px;width:265px;height:398px;background:#fff;border:1px solid #8c8c8c"></div>
<div style="position:absolute;left:1268px;top:258px;width:263px;height:24px;background:#f3f3f3"></div>
<div class="t" style="left:1276px;top:261.5px;letter-spacing:-0.401px">192.168.0.2</div>
<div class="btn" style="left:1536px;top:257px;width:28px;height:28px;background:#f3f3f3;border-color:#e6e6e6"><svg style="position:absolute;left:1.0px;top:1.0px" width="24" height="24" viewBox="0 0 24 24"><path fill="#b8b8b8" fill-rule="evenodd" d="M20.71,7.04C21.1,6.65 21.1,6 20.71,5.63L18.37,3.29C18,2.9 17.35,2.9 16.96,3.29L15.12,5.12L18.87,8.87M3,17.25V21H6.75L17.81,9.93L14.06,6.18L3,17.25Z"/></svg></div>
<div class="btn" style="left:1536px;top:289px;width:28px;height:28px;background:#f3f3f3;border-color:#e6e6e6"><svg style="position:absolute;left:1.0px;top:1.0px" width="24" height="24" viewBox="0 0 24 24"><path fill="#b8b8b8" fill-rule="evenodd" d="M19,19V5H5V19H19M19,3A2,2 0 0,1 21,5V19A2,2 0 0,1 19,21H5A2,2 0 0,1 3,19V5C3,3.89 3.9,3 5,3H19M17,11V13H7V11H17Z"/></svg></div>
<div class="btn" style="left:1536px;top:321px;width:28px;height:28px;background:#efefef;border-color:#d2d2d2"><svg style="position:absolute;left:1.0px;top:1.0px" width="24" height="24" viewBox="0 0 24 24"><path fill="#484848" fill-rule="evenodd" d="M2,2H14V4H4V14H2ZM6,6H18V8H8V18H6ZM11.5,10H20.5A1.5,1.5 0 0,1 22,11.5V20.5A1.5,1.5 0 0,1 20.5,22H11.5A1.5,1.5 0 0,1 10,20.5V11.5A1.5,1.5 0 0,1 11.5,10ZM12,12V20H20V12ZM13,15H19V17H13Z"/></svg></div><svg style="position:absolute;left:1267px;top:672.5px" width="24" height="24" viewBox="0 0 24 24"><path fill="#555" fill-rule="evenodd" d="M10,4H4C2.89,4 2,4.89 2,6V18A2,2 0 0,0 4,20H20A2,2 0 0,0 22,18V8C22,6.89 21.1,6 20,6H12L10,4Z"/></svg>
<div class="t" style="left:1299px;top:675.0px;font-size:14px;font-weight:bold;color:#111;line-height:18px;letter-spacing:-0.253px">Host Groups</div>
<div class="combo" style="left:1267px;top:702px;width:265px;height:28px;background:#efefef;border-color:#d0d0d0"></div>
<div class="t" style="left:1276px;top:708px;color:#444;letter-spacing:-0.043px">Select from list</div>
<svg style="position:absolute;left:1504.0px;top:709.5px" width="13" height="13" viewBox="0 0 12 12"><path d="M1.5,3.5L6,8L10.5,3.5" fill="none" stroke="#333" stroke-width="1.6"/></svg>
<div class="btn" style="left:1536px;top:702px;width:28px;height:28px;background:#efefef;border-color:#d2d2d2"><svg style="position:absolute;left:1.0px;top:1.0px" width="24" height="24" viewBox="0 0 24 24"><path fill="#484848" fill-rule="evenodd" d="M19,13H13V19H11V13H5V11H11V5H13V11H19V13Z"/></svg></div>
<div style="position:absolute;left:1267px;top:734px;width:265px;height:160px;background:#fff;border:1px solid #8c8c8c"></div>
<div class="btn" style="left:1536px;top:734px;width:28px;height:28px;background:#f3f3f3;border-color:#e6e6e6"><svg style="position:absolute;left:1.0px;top:1.0px" width="24" height="24" viewBox="0 0 24 24"><path fill="#b8b8b8" fill-rule="evenodd" d="M20.71,7.04C21.1,6.65 21.1,6 20.71,5.63L18.37,3.29C18,2.9 17.35,2.9 16.96,3.29L15.12,5.12L18.87,8.87M3,17.25V21H6.75L17.81,9.93L14.06,6.18L3,17.25Z"/></svg></div>
<div class="btn" style="left:1536px;top:766px;width:28px;height:28px;background:#f3f3f3;border-color:#e6e6e6"><svg style="position:absolute;left:1.0px;top:1.0px" width="24" height="24" viewBox="0 0 24 24"><path fill="#b8b8b8" fill-rule="evenodd" d="M19,19V5H5V19H19M19,3A2,2 0 0,1 21,5V19A2,2 0 0,1 19,21H5A2,2 0 0,1 3,19V5C3,3.89 3.9,3 5,3H19M17,11V13H7V11H17Z"/></svg></div>
<div class="btn" style="left:1536px;top:798px;width:28px;height:28px;background:#efefef;border-color:#d2d2d2"><svg style="position:absolute;left:1.0px;top:1.0px" width="24" height="24" viewBox="0 0 24 24"><path fill="#484848" fill-rule="evenodd" d="M2,2H14V4H4V14H2ZM6,6H18V8H8V18H6ZM11.5,10H20.5A1.5,1.5 0 0,1 22,11.5V20.5A1.5,1.5 0 0,1 20.5,22H11.5A1.5,1.5 0 0,1 10,20.5V11.5A1.5,1.5 0 0,1 11.5,10ZM12,12V20H20V12ZM13,15H19V17H13Z"/></svg></div><svg style="position:absolute;left:1267px;top:911.5px" width="24" height="24" viewBox="0 0 24 24"><path fill="#555" fill-rule="evenodd" d="M10,4H4C2.89,4 2,4.89 2,6V18A2,2 0 0,0 4,20H20A2,2 0 0,0 22,18V8C22,6.89 21.1,6 20,6H12L10,4Z"/></svg>
<div class="t" style="left:1299px;top:914.0px;font-size:14px;font-weight:bold;color:#111;line-height:18px;letter-spacing:-0.173px">Template Groups</div>
<div class="combo" style="left:1267px;top:940px;width:265px;height:28px;background:#efefef;border-color:#d0d0d0"></div>
<div class="t" style="left:1276px;top:946px;color:#444;letter-spacing:-0.043px">Select from list</div>
<svg style="position:absolute;left:1504.0px;top:947.5px" width="13" height="13" viewBox="0 0 12 12"><path d="M1.5,3.5L6,8L10.5,3.5" fill="none" stroke="#333" stroke-width="1.6"/></svg>
<div class="btn" style="left:1536px;top:940px;width:28px;height:28px;background:#efefef;border-color:#d2d2d2"><svg style="position:absolute;left:1.0px;top:1.0px" width="24" height="24" viewBox="0 0 24 24"><path fill="#484848" fill-rule="evenodd" d="M19,13H13V19H11V13H5V11H11V5H13V11H19V13Z"/></svg></div>
<div style="position:absolute;left:1267px;top:972px;width:265px;height:164px;background:#fff;border:1px solid #8c8c8c"></div>
<div style="position:absolute;left:1268px;top:973px;width:263px;height:24px;background:#f3f3f3"></div>
<div class="t" style="left:1276px;top:977.5px;letter-spacing:0.025px">Text Log Monitor / Consolidation Tests</div>
<div class="btn" style="left:1536px;top:972px;width:28px;height:28px;background:#efefef;border-color:#d2d2d2"><svg style="position:absolute;left:1.0px;top:1.0px" width="24" height="24" viewBox="0 0 24 24"><path fill="#484848" fill-rule="evenodd" d="M20.71,7.04C21.1,6.65 21.1,6 20.71,5.63L18.37,3.29C18,2.9 17.35,2.9 16.96,3.29L15.12,5.12L18.87,8.87M3,17.25V21H6.75L17.81,9.93L14.06,6.18L3,17.25Z"/></svg></div>
<div class="btn" style="left:1536px;top:1004px;width:28px;height:28px;background:#efefef;border-color:#d2d2d2"><svg style="position:absolute;left:1.0px;top:1.0px" width="24" height="24" viewBox="0 0 24 24"><path fill="#484848" fill-rule="evenodd" d="M19,19V5H5V19H19M19,3A2,2 0 0,1 21,5V19A2,2 0 0,1 19,21H5A2,2 0 0,1 3,19V5C3,3.89 3.9,3 5,3H19M17,11V13H7V11H17Z"/></svg></div>
<div class="btn" style="left:1536px;top:1036px;width:28px;height:28px;background:#efefef;border-color:#d2d2d2"><svg style="position:absolute;left:1.0px;top:1.0px" width="24" height="24" viewBox="0 0 24 24"><path fill="#484848" fill-rule="evenodd" d="M2,2H14V4H4V14H2ZM6,6H18V8H8V18H6ZM11.5,10H20.5A1.5,1.5 0 0,1 22,11.5V20.5A1.5,1.5 0 0,1 20.5,22H11.5A1.5,1.5 0 0,1 10,20.5V11.5A1.5,1.5 0 0,1 11.5,10ZM12,12V20H20V12ZM13,15H19V17H13Z"/></svg></div>
</body></html>
